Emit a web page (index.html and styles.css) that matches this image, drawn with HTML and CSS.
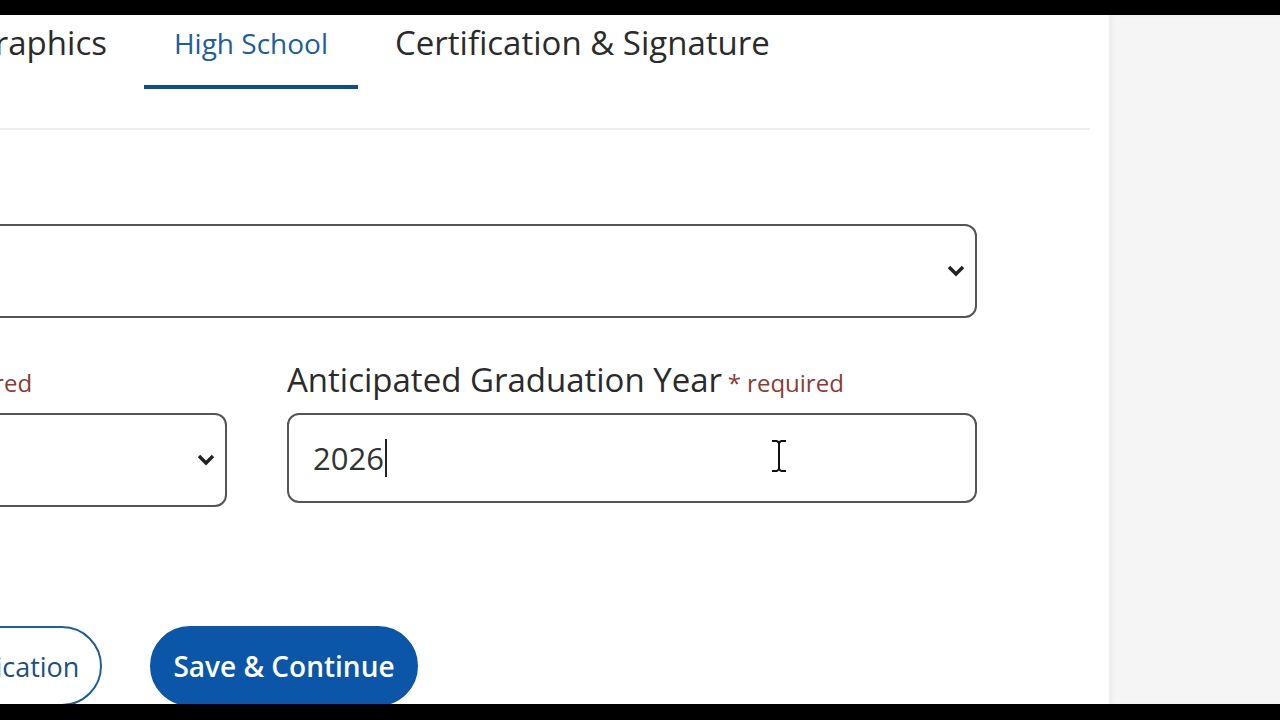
FILE: index.html
```html
<html>

<head>
    <link rel="stylesheet" href="styles.css">
</head>

<body>
    <div class="frame">
        <div class="screen">
            <main class="content">
                <!-- Step tabs -->
                <nav class="tabs">
                    <a class="tab">Demographics</a>
                    <a class="tab active">High School</a>
                    <a class="tab">Certification &amp; Signature</a>
                </nav>
                <div class="divider"></div>

                <!-- High school form -->
                <form class="form">
                    <div class="field full">
                        <div class="select">
                            <span class="select-value"></span>
                            <svg class="chevron" width="18" height="12" viewBox="0 0 18 12">
                                <path d="M2 2 L9 9 L16 2" fill="none" stroke="#222" stroke-width="3.4" />
                            </svg>
                        </div>
                    </div>

                    <div class="field">
                        <label class="form-label">Current Grade Level <span class="req">* required</span></label>
                        <div class="select">
                            <span class="select-value"></span>
                            <svg class="chevron" width="18" height="12" viewBox="0 0 18 12">
                                <path d="M2 2 L9 9 L16 2" fill="none" stroke="#222" stroke-width="3.4" />
                            </svg>
                        </div>
                    </div>

                    <div class="field">
                        <label class="form-label">Anticipated Graduation Year <span class="req">* required</span></label>
                        <div class="text-input">
                            <span>2026</span><span class="caret"></span>
                            <!-- mouse pointer over the input -->
                            <svg class="ibeam" width="20" height="34" viewBox="0 0 20 34">
                                <path d="M3 2 H8 M12 2 H17 M8 2 Q10 3 10 5 V29 Q10 31 12 32 M12 2 Q10 3 10 5 M10 29 Q10 31 8 32 M3 32 H8 M12 32 H17"
                                    fill="none" stroke="#fff" stroke-width="4" />
                                <path d="M3 2 H8 M12 2 H17 M8 2 Q10 3 10 5 V29 Q10 31 12 32 M12 2 Q10 3 10 5 M10 29 Q10 31 8 32 M3 32 H8 M12 32 H17"
                                    fill="none" stroke="#111" stroke-width="2" />
                            </svg>
                        </div>
                    </div>
                </form>

                <div class="actions">
                    <button class="btn btn-outline">Back to Application</button>
                    <button class="btn btn-primary">Save &amp; Continue</button>
                </div>
            </main>
            <aside class="side"></aside>
        </div>
    </div>
</body>

</html>
```

FILE: styles.css
```css
* {
    font-family: "Open Sans", "Noto Sans", sans-serif;
    margin: 0;
    padding: 0;
    box-sizing: border-box;
}

body {
    background: #000;
    overflow: hidden;
}

.frame {
    height: 720px;
    padding: 15px 0 16px;
}

.screen {
    display: flex;
    height: 100%;
    background: #fff;
}

.content {
    width: 1109px;
    overflow: hidden;
    padding-right: 19px;
}

.side {
    flex: 1;
    background: #f5f5f5;
    box-shadow: inset 4px 0 4px rgba(0, 0, 0, 0.03);
}

/* tabs */

.tabs {
    display: flex;
    align-items: flex-end;
    gap: 7px;
    margin-left: -146px;
}

.tab {
    font-size: 33px;
    line-height: 40px;
    color: #2b2b2b;
    padding: 8px 30px 22px;
    border-bottom: 4px solid transparent;
    white-space: nowrap;
}

.tab.active {
    font-size: 28px;
    color: #1d5e9e;
    border-bottom-color: #0b4f93;
}

.divider {
    height: 2px;
    background: #eeeeee;
    margin-top: 39px;
}

/* form */

.form {
    display: grid;
    grid-template-columns: 626px 690px;
    column-gap: 60px;
    row-gap: 42px;
    margin: 94px 0 0 -399px;
    width: 1376px;
}

.field {
    display: flex;
    flex-direction: column;
}

.field.full {
    grid-column: 1 / 3;
}

.form-label {
    font-size: 33px;
    line-height: 40px;
    color: #2b2b2b;
    margin-bottom: 10px;
    white-space: nowrap;
}

.req {
    font-size: 24px;
    color: #8e3a33;
    margin-left: -3px;
}

.select {
    height: 94px;
    border: 2px solid #555;
    border-radius: 12px;
    display: flex;
    align-items: center;
    justify-content: space-between;
    padding: 0 10px 0 24px;
}

.text-input {
    position: relative;
    height: 90px;
    border: 2px solid #555;
    border-radius: 12px;
    display: flex;
    align-items: center;
    padding: 0 24px;
    font-size: 31px;
    color: #333;
}

.caret {
    display: inline-block;
    width: 2px;
    height: 38px;
    background: #222;
    margin-left: 1px;
}

.ibeam {
    position: absolute;
    left: 480px;
    top: 24px;
}

/* buttons */

.actions {
    display: flex;
    gap: 48px;
    margin: 119px 0 0 -184px;
}

.btn {
    height: 80px;
    border-radius: 40px;
    font-size: 27px;
    padding: 0 21px;
    white-space: nowrap;
}

.btn-outline {
    background: #fff;
    color: #1d4f86;
    border: 2px solid #1d5e9e;
}

.btn-primary {
    background: #0b56a8;
    color: #fff;
    font-size: 28px;
    font-weight: 600;
    border: 2px solid #0b56a8;
}
```
